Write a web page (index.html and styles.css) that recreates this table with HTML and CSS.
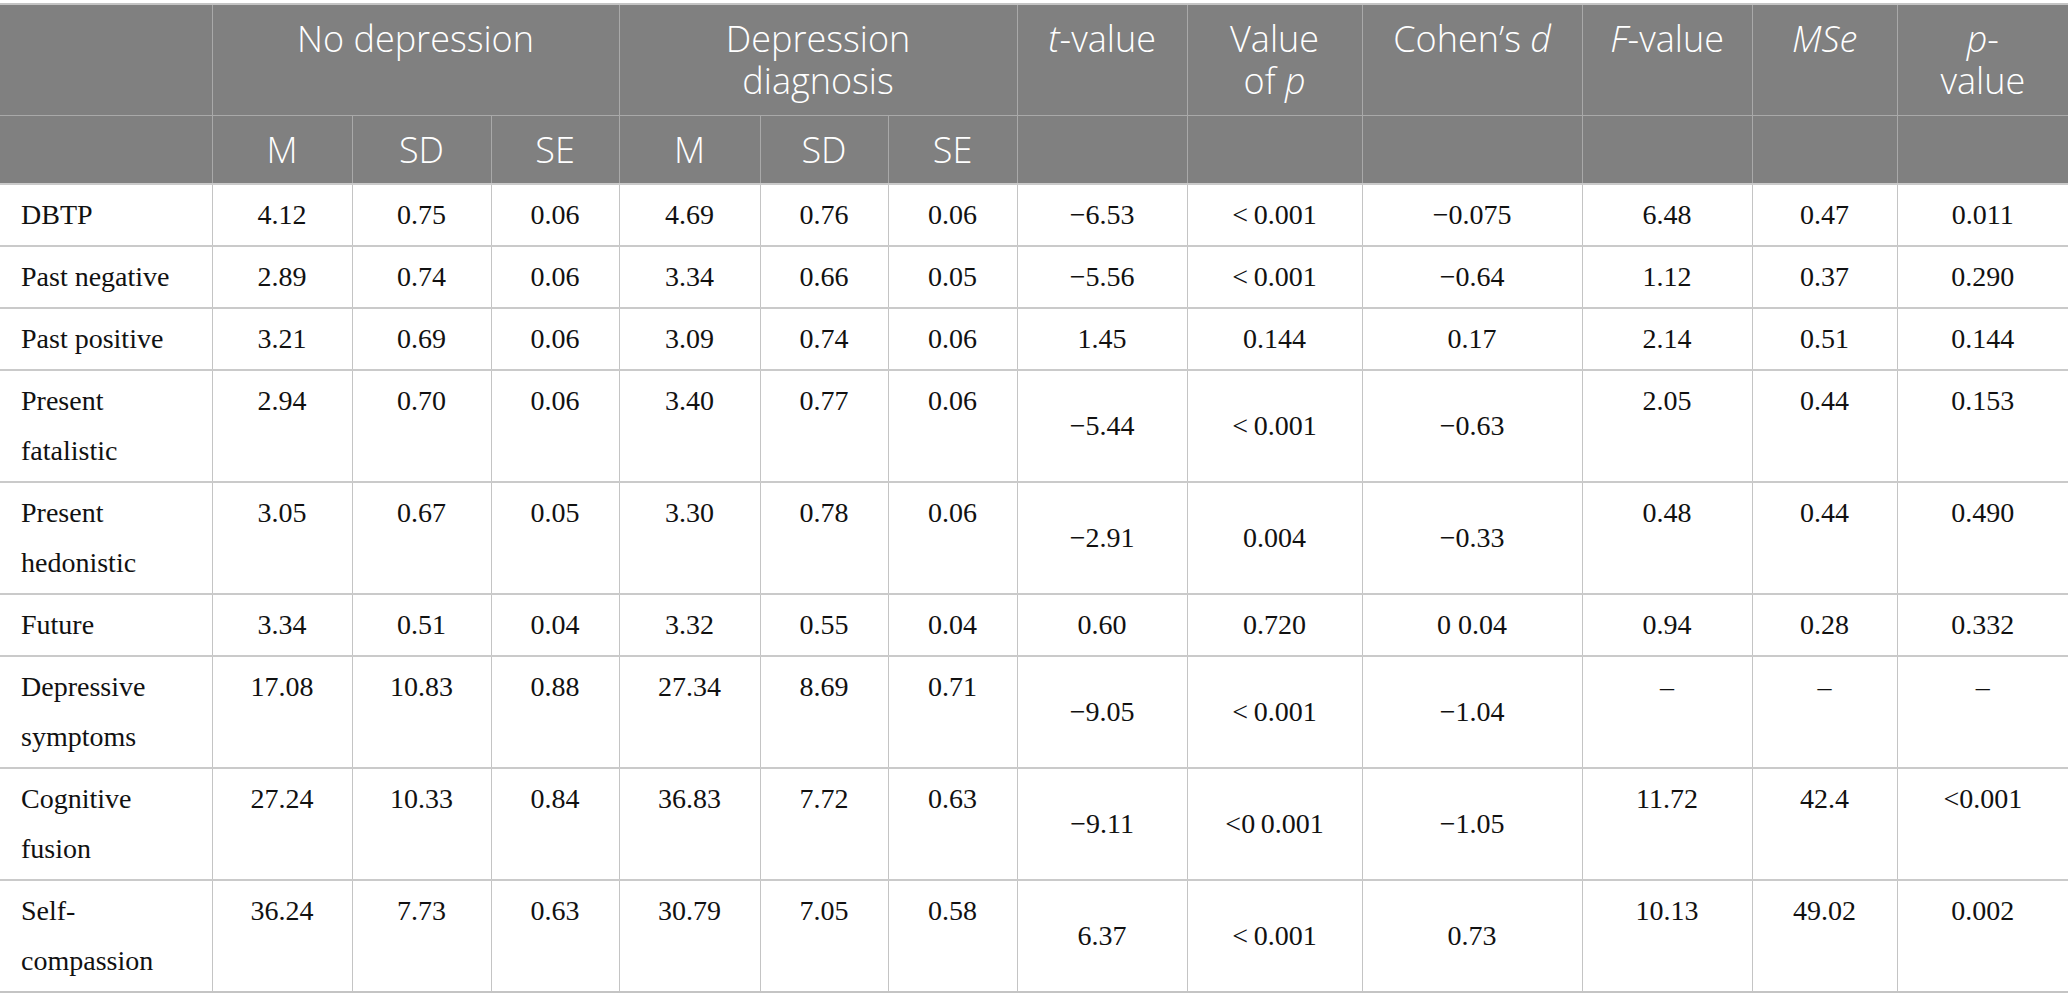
FILE: index.html
```html
<!DOCTYPE html>

<html>

    <head>

        <title> Time perspective and depression </title>
        <meta charset="utf-8"/>

        <link rel="stylesheet" href="styles.css">

    </head>

    <body>

        <table class="results">

            <colgroup>
                <col style="width: 212px;">
                <col style="width: 140px;">
                <col style="width: 139px;">
                <col style="width: 128px;">
                <col style="width: 141px;">
                <col style="width: 128px;">
                <col style="width: 129px;">
                <col style="width: 170px;">
                <col style="width: 175px;">
                <col style="width: 220px;">
                <col style="width: 170px;">
                <col style="width: 145px;">
                <col style="width: 171px;">
            </colgroup>

            <thead>
                <tr class="group">
                    <th></th>
                    <th colspan="3"> No depression </th>
                    <th colspan="3"> Depression<br>diagnosis </th>
                    <th><i>t</i>-value</th>
                    <th> Value<br>of <i>p</i></th>
                    <th> Cohen’s <i>d</i></th>
                    <th><i>F</i>-value</th>
                    <th><i>MSe</i></th>
                    <th><i>p</i>-<br>value</th>
                </tr>
                <tr class="sub">
                    <th></th>
                    <th> M </th>
                    <th> SD </th>
                    <th> SE </th>
                    <th> M </th>
                    <th> SD </th>
                    <th> SE </th>
                    <th></th>
                    <th></th>
                    <th></th>
                    <th></th>
                    <th></th>
                    <th></th>
                </tr>
            </thead>

            <tbody>
                <tr>
                    <td class="name"> DBTP </td>
                    <td>4.12</td><td>0.75</td><td>0.06</td>
                    <td>4.69</td><td>0.76</td><td>0.06</td>
                    <td class="mid">−6.53</td><td class="mid">&lt;&thinsp;0.001</td><td class="mid">−0.075</td>
                    <td>6.48</td><td>0.47</td><td>0.011</td>
                </tr>
                <tr>
                    <td class="name"> Past negative </td>
                    <td>2.89</td><td>0.74</td><td>0.06</td>
                    <td>3.34</td><td>0.66</td><td>0.05</td>
                    <td class="mid">−5.56</td><td class="mid">&lt;&thinsp;0.001</td><td class="mid">−0.64</td>
                    <td>1.12</td><td>0.37</td><td>0.290</td>
                </tr>
                <tr>
                    <td class="name"> Past positive </td>
                    <td>3.21</td><td>0.69</td><td>0.06</td>
                    <td>3.09</td><td>0.74</td><td>0.06</td>
                    <td class="mid">1.45</td><td class="mid">0.144</td><td class="mid">0.17</td>
                    <td>2.14</td><td>0.51</td><td>0.144</td>
                </tr>
                <tr>
                    <td class="name"> Present fatalistic </td>
                    <td>2.94</td><td>0.70</td><td>0.06</td>
                    <td>3.40</td><td>0.77</td><td>0.06</td>
                    <td class="mid">−5.44</td><td class="mid">&lt;&thinsp;0.001</td><td class="mid">−0.63</td>
                    <td>2.05</td><td>0.44</td><td>0.153</td>
                </tr>
                <tr>
                    <td class="name"> Present hedonistic </td>
                    <td>3.05</td><td>0.67</td><td>0.05</td>
                    <td>3.30</td><td>0.78</td><td>0.06</td>
                    <td class="mid">−2.91</td><td class="mid">0.004</td><td class="mid">−0.33</td>
                    <td>0.48</td><td>0.44</td><td>0.490</td>
                </tr>
                <tr>
                    <td class="name"> Future </td>
                    <td>3.34</td><td>0.51</td><td>0.04</td>
                    <td>3.32</td><td>0.55</td><td>0.04</td>
                    <td class="mid">0.60</td><td class="mid">0.720</td><td class="mid">0 0.04</td>
                    <td>0.94</td><td>0.28</td><td>0.332</td>
                </tr>
                <tr>
                    <td class="name"> Depressive symptoms </td>
                    <td>17.08</td><td>10.83</td><td>0.88</td>
                    <td>27.34</td><td>8.69</td><td>0.71</td>
                    <td class="mid">−9.05</td><td class="mid">&lt;&thinsp;0.001</td><td class="mid">−1.04</td>
                    <td>–</td><td>–</td><td>–</td>
                </tr>
                <tr>
                    <td class="name"> Cognitive fusion </td>
                    <td>27.24</td><td>10.33</td><td>0.84</td>
                    <td>36.83</td><td>7.72</td><td>0.63</td>
                    <td class="mid">−9.11</td><td class="mid">&lt;0&thinsp;0.001</td><td class="mid">−1.05</td>
                    <td>11.72</td><td>42.4</td><td>&lt;0.001</td>
                </tr>
                <tr>
                    <td class="name"> Self-compassion </td>
                    <td>36.24</td><td>7.73</td><td>0.63</td>
                    <td>30.79</td><td>7.05</td><td>0.58</td>
                    <td class="mid">6.37</td><td class="mid">&lt;&thinsp;0.001</td><td class="mid">0.73</td>
                    <td>10.13</td><td>49.02</td><td>0.002</td>
                </tr>
            </tbody>

        </table>

    </body>

</html>
```

FILE: styles.css
```css
* {
    margin: 0;
    padding: 0;
}

body {
    padding-top: 3px;

    background-color: white;
}

.results {
    width: 2068px;

    table-layout: fixed;
    border-collapse: collapse;
    border-top: 2px solid #c4c4c4;
    border-bottom: 2px solid #c4c4c4;
}

.results th {
    padding: 13px 8px 13px 8px;

    background-color: #808080;
    color: white;
    border: 1px solid #a9a9a9;
    border-top: none;

    font-family: 'Open Sans', sans-serif;
    font-size: 36px;
    font-weight: 300;
    line-height: 42px;
    text-align: center;
    vertical-align: top;
}

.results th:first-child {
    border-left: none;
}

.results th:last-child {
    border-right: none;
}

.results .sub th {
    padding-bottom: 12px;
}

.results td {
    padding: 5px 8px;

    color: #111;
    border-left: 1px solid #c4c4c4;
    border-right: 1px solid #c4c4c4;
    border-top: 2px solid #cacaca;

    font-family: 'Liberation Serif', serif;
    font-size: 28px;
    line-height: 50px;
    text-align: center;
    vertical-align: top;
}

.results td:first-child {
    border-left: none;
}

.results td:last-child {
    border-right: none;
}

.results td.name {
    padding-left: 21px;
    padding-right: 21px;

    text-align: left;
}

.results td.mid {
    vertical-align: middle;
}
```
